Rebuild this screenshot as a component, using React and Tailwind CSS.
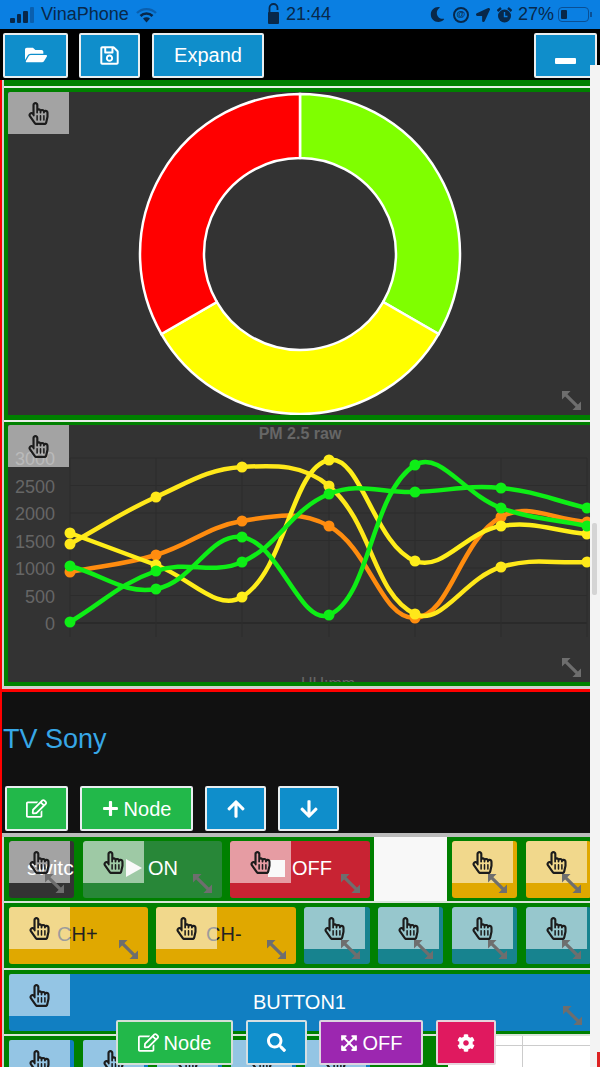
import { FaRegHandPointer, FaFolderOpen, FaRegSave, FaRegEdit, FaPlus, FaArrowUp, FaArrowDown, FaSearch, FaExpandArrowsAlt, FaCog, FaMoon, FaLocationArrow } from 'react-icons/fa'

const XS = [70, 156, 242, 329, 415, 501, 587]
const SERIES = [
  { color: '#ff8c0f', ys: [572, 555, 521, 526, 618, 517, 522] },
  { color: '#ffe81a', ys: [544, 497, 467, 486, 614, 567, 562] },
  { color: '#ffee1a', ys: [533, 565, 597, 460, 561, 526, 534] },
  { color: '#0eee16', ys: [622, 571, 562, 494, 492, 488, 508] },
  { color: '#0eee16', ys: [566, 589, 537, 615, 465, 508, 526] },
]
const LABELS = ['3000', '2500', '2000', '1500', '1000', '500', '0']

// same spline as chart.js, tension 0.4
function splinePath(ys) {
  const pts = ys.map((y, i) => ({ x: XS[i], y }))
  const t = 0.4
  let d = `M${pts[0].x} ${pts[0].y}`
  const ctrl = pts.map((p, i) => {
    const a = pts[i - 1] || p
    const b = pts[i + 1] || p
    const d01 = Math.hypot(p.x - a.x, p.y - a.y)
    const d12 = Math.hypot(b.x - p.x, b.y - p.y)
    const s = d01 + d12 || 1
    const fa = (t * d01) / s
    const fb = (t * d12) / s
    return {
      px: p.x - fa * (b.x - a.x),
      py: p.y - fa * (b.y - a.y),
      nx: p.x + fb * (b.x - a.x),
      ny: p.y + fb * (b.y - a.y),
    }
  })
  for (let i = 1; i < pts.length; i++) {
    d += `C${ctrl[i - 1].nx} ${ctrl[i - 1].ny} ${ctrl[i].px} ${ctrl[i].py} ${pts[i].x} ${pts[i].y}`
  }
  return d
}

function arc(cx, cy, r0, r1, a0, a1) {
  const p = (r, a) => `${cx + r * Math.sin(a)} ${cy - r * Math.cos(a)}`
  return `M${p(r1, a0)}A${r1} ${r1} 0 0 1 ${p(r1, a1)}L${p(r0, a1)}A${r0} ${r0} 0 0 0 ${p(r0, a0)}Z`
}

function ResizeIcon({ className }) {
  return (
    <svg viewBox="0 0 20 20" className={'absolute w-[19px] h-[19px] ' + className}>
      <path d="M4 4L16 16" stroke="#6e6e6e" strokeWidth="3.4" />
      <path d="M0 0H9L0 9Z M20 20H11L20 11Z" fill="#6e6e6e" />
    </svg>
  )
}

// translucent drag handle in the tile's corner
function Handle() {
  return (
    <div className="absolute left-0 top-0 w-[61px] h-[42px] bg-white/55 flex items-center justify-center rounded-tl-[2px] z-[1]">
      <FaRegHandPointer size={23} className="text-[#1c1c1c]" />
    </div>
  )
}

function Tile({ bg, w, children }) {
  return (
    <div className={'relative shrink-0 h-[57px] rounded-[3px] overflow-hidden flex items-center ' + bg + ' ' + w}>
      {children}
      <Handle />
      <ResizeIcon className="right-[10px] bottom-[5px] z-[2]" />
    </div>
  )
}

function ToolBtn({ w, bg = 'bg-[#0f8ecb]', border = 'border-[#e8eef0]', children }) {
  return (
    <button className={'h-[45px] border-2 rounded-[2px] text-white text-[20px] flex items-center justify-center gap-[5px] shrink-0 ' + border + ' ' + bg + ' ' + w}>
      {children}
    </button>
  )
}

function StatusBar() {
  return (
    <div className="h-[29px] bg-[#0a7fe2] flex items-center text-[#08284a] text-[18px]">
      <div className="w-[267px] pl-[10px] flex items-center">
        <div className="flex items-end gap-[2px] h-[16px] mt-[1px]">
          <span className="w-[4.5px] h-[5px] bg-[#08284a] rounded-[1px]" />
          <span className="w-[4.5px] h-[9px] bg-[#08284a] rounded-[1px]" />
          <span className="w-[4.5px] h-[12px] bg-[#08284a] rounded-[1px]" />
          <span className="w-[4.5px] h-[16px] bg-[#0a5fae] rounded-[1px]" />
        </div>
        <span className="ml-[7px]">VinaPhone</span>
        <svg width="21" height="16" viewBox="0 0 21 16" className="ml-[7px]">
          <path d="M1 6A13.5 13.5 0 0 1 20 6" fill="none" stroke="#0a5fae" strokeWidth="2.4" />
          <path d="M4.5 9A8.5 8.5 0 0 1 16.5 9" fill="none" stroke="#08284a" strokeWidth="2.6" />
          <path d="M10.5 15.5L7 11.6A5 5 0 0 1 14 11.6Z" fill="#08284a" />
        </svg>
      </div>
      <svg width="13" height="21" viewBox="0 0 13 21" className="-mt-[3px]">
        <path d="M2.5 10V5A4 4 0 0 1 10.5 5V7" fill="none" stroke="#08284a" strokeWidth="1.8" />
        <rect x="1" y="9" width="11" height="12" rx="1" fill="#08284a" />
      </svg>
      <span className="ml-[6px] font-medium">21:44</span>
      <div className="ml-auto flex items-center pr-[8px]">
        <FaMoon size={15} />
        <span className="ml-[8px] w-[16px] h-[16px] rounded-full border-2 border-[#08284a] text-[9px] font-bold flex items-center justify-center">@</span>
        <FaLocationArrow size={14} className="ml-[7px]" />
        <svg width="15" height="16" viewBox="0 0 15 16" className="ml-[7px]">
          <circle cx="7.5" cy="9" r="6.5" fill="#08284a" />
          <path d="M7.5 5V9.5H10.5" fill="none" stroke="#0a7fe2" strokeWidth="1.4" />
          <path d="M0.5 4L4 1M14.5 4L11 1" stroke="#08284a" strokeWidth="2.4" />
        </svg>
        <span className="ml-[6px]">27%</span>
        <div className="ml-[4px] w-[31px] h-[15px] border border-[#0a4f94] rounded-[4px] p-[2px]">
          <div className="w-[6px] h-full bg-[#08284a] rounded-[1px]" />
        </div>
        <span className="w-[2px] h-[5px] bg-[#0a4f94] ml-[1px]" />
      </div>
    </div>
  )
}

function Toolbar() {
  return (
    <div className="h-[51px] bg-black flex items-center pl-[3px] pr-[3px] pt-[1px]">
      <ToolBtn w="w-[65px]"><FaFolderOpen size={22} /></ToolBtn>
      <ToolBtn w="w-[61px] ml-[11px]"><FaRegSave size={21} /></ToolBtn>
      <ToolBtn w="w-[112px] ml-[12px]">Expand</ToolBtn>
      <ToolBtn w="w-[63px] ml-auto"><span className="w-[21px] h-[6px] bg-white rounded-[1px] mt-[11px]" /></ToolBtn>
    </div>
  )
}

function DonutPanel() {
  return (
    <div className="relative h-[323px] bg-[#333333]">
      <svg viewBox="8 92 582 323" className="w-[582px] h-[323px] block">
        <g stroke="#ffffff" strokeWidth="2.5">
          <path d={arc(300, 254, 96, 160, 0, (2 * Math.PI) / 3)} fill="#7fff00" />
          <path d={arc(300, 254, 96, 160, (2 * Math.PI) / 3, (4 * Math.PI) / 3)} fill="#ffff00" />
          <path d={arc(300, 254, 96, 160, (4 * Math.PI) / 3, 2 * Math.PI)} fill="#ff0000" />
        </g>
      </svg>
      <Handle />
      <ResizeIcon className="right-[9px] bottom-[5px]" />
    </div>
  )
}

function ChartPanel() {
  return (
    <div className="relative h-[257px] bg-[#333333] overflow-hidden">
      <svg viewBox="8 425 582 257" className="w-[582px] h-[257px] block" fontFamily="Liberation Sans, sans-serif">
        {LABELS.map((l, i) => (
          <g key={l}>
            <line x1="70" x2="587" y1={458 + i * 27.5} y2={458 + i * 27.5} stroke={i === 6 ? '#222222' : '#2c2c2c'} />
            <text x="55" y={465 + i * 27.5} textAnchor="end" fontSize="18" fill="#666666">{l}</text>
          </g>
        ))}
        {XS.map(x => <line key={x} x1={x} x2={x} y1="458" y2="637" stroke="#2c2c2c" />)}
        <text x="300" y="439" textAnchor="middle" fontSize="16" fontWeight="700" fill="#666666">PM 2.5 raw</text>
        <text x="328" y="689" textAnchor="middle" fontSize="16" fill="#666666">HH:mm</text>
        {SERIES.map((s, i) => (
          <g key={i}>
            <path d={splinePath(s.ys)} fill="none" stroke={s.color} strokeWidth="4.5" />
            {s.ys.map((y, j) => <circle key={j} cx={XS[j]} cy={y} r="5.5" fill={s.color} />)}
          </g>
        ))}
      </svg>
      <Handle />
      <ResizeIcon className="right-[9px] bottom-[5px]" />
    </div>
  )
}

function Rows() {
  const teal = 'bg-[#17838f]'
  const amber = 'bg-[#e0a800]'
  return (
    <div className="bg-[#d9e4d9]">
      {/* row 1 */}
      <div className="h-[64px] flex">
        <div className="w-[370px] bg-[#008000] pl-[5px] pt-[4px] flex">
          <Tile bg="bg-[#333333]" w="w-[65px]">
            <span className="text-white text-[21px] pl-[18px] -mt-[3px] whitespace-nowrap">switch</span>
          </Tile>
          <Tile bg="bg-[#288738]" w="w-[139px] ml-[9px]">
            <span className="text-white text-[20px] pl-[43px] -mt-[3px] flex items-center gap-[6px] whitespace-nowrap">
              <svg width="16" height="18" viewBox="0 0 16 18"><path d="M0 0L16 9L0 18Z" fill="#f2f2f2" /></svg>ON
            </span>
          </Tile>
          <Tile bg="bg-[#c82333]" w="w-[140px] ml-[8px]">
            <span className="text-white text-[20px] pl-[38px] -mt-[3px] flex items-center gap-[7px] whitespace-nowrap">
              <span className="w-[17px] h-[17px] bg-[#f2f2f2]" />OFF
            </span>
          </Tile>
        </div>
        <div className="w-[73px] bg-[#f8f8f8]" />
        <div className="flex-1 bg-[#008000] pl-[5px] pt-[4px] flex gap-[9px] overflow-hidden">
          <Tile bg={amber} w="w-[65px]" />
          <Tile bg={amber} w="w-[65px]" />
        </div>
      </div>
      {/* row 2 */}
      <div className="h-[65px] mt-[2px] bg-[#008000] pl-[5px] pt-[4px] flex overflow-hidden">
        <Tile bg={amber} w="w-[139px]">
          <span className="text-[#222222] text-[20px] pl-[48px] -mt-[3px]">CH+</span>
        </Tile>
        <Tile bg={amber} w="w-[140px] ml-[8px]">
          <span className="text-[#222222] text-[20px] pl-[50px] -mt-[3px]">CH-</span>
        </Tile>
        <Tile bg={teal} w="w-[66px] ml-[8px]" />
        <Tile bg={teal} w="w-[65px] ml-[8px]" />
        <Tile bg={teal} w="w-[65px] ml-[9px]" />
        <Tile bg={teal} w="w-[65px] ml-[9px]" />
      </div>
      {/* row 3 */}
      <div className="h-[64px] mt-[2px] bg-[#008000] pl-[5px] pt-[4px]">
        <div className="relative h-[57px] bg-[#117fc2] rounded-l-[3px] flex items-center justify-center">
          <span className="text-white text-[20px] -mt-[1px]">BUTTON1</span>
          <Handle />
          <ResizeIcon className="right-[8px] bottom-[6px]" />
        </div>
      </div>
      {/* row 4, runs off the page */}
      <div className="h-[40px] mt-[2px] flex bg-white">
        <div className="w-[444px] bg-[#008000] pl-[5px] pt-[4px] flex gap-[9px] overflow-hidden">
          {[0, 1, 2, 3, 4].map(i => (
            <div key={i} className="relative w-[65px] h-[57px] shrink-0 bg-[#117fc2] rounded-[3px]"><Handle /></div>
          ))}
        </div>
        <div className="flex-1 relative">
          <div className="absolute left-0 right-0 top-[9px] h-px bg-[#cccccc]" />
          <div className="absolute left-[74px] top-0 bottom-0 w-px bg-[#cccccc]" />
        </div>
      </div>
    </div>
  )
}

function TvHeader() {
  return (
    <div className="h-[141px] bg-[#111111] flex flex-col">
      <div className="text-[#37a7e6] text-[27px] leading-[32px] pl-[1px] mt-[31px]">TV Sony</div>
      <div className="mt-auto mb-[2px] flex pl-[3px]">
        <ToolBtn w="w-[63px]" bg="bg-[#22b84a]"><FaRegEdit size={21} /></ToolBtn>
        <ToolBtn w="w-[113px] ml-[12px]" bg="bg-[#22b84a]"><FaPlus size={17} />Node</ToolBtn>
        <ToolBtn w="w-[61px] ml-[12px]"><FaArrowUp size={20} /></ToolBtn>
        <ToolBtn w="w-[61px] ml-[12px]"><FaArrowDown size={20} /></ToolBtn>
      </div>
    </div>
  )
}

export default function App() {
  return (
    <div className="relative w-[600px] h-[1067px] overflow-hidden bg-[#f3f3f3] font-['Liberation_Sans',sans-serif]">
      <StatusBar />
      <Toolbar />

      <div className="w-[590px] border-l-2 border-[#ff0000]">
        <div className="bg-[#d0d0d0] pl-[2px]">
          <div className="bg-[#008000] h-[12px] flex flex-col pt-[6px]"><div className="h-[2px] bg-[#e6efe6]" /></div>
          <div className="bg-[#008000] pl-[4px]"><DonutPanel /></div>
          <div className="bg-[#008000] h-[10px] pt-[5px]"><div className="h-[2px] bg-[#e6efe6]" /></div>
          <div className="bg-[#008000] pl-[4px]"><ChartPanel /></div>
          <div className="bg-[#008000] h-[4px]" />
          <div className="h-[3px]" />
        </div>
      </div>
      <div className="w-[590px] h-[3px] bg-[#ff0000]" />

      <div className="w-[590px] border-l-2 border-[#ff0000]">
        <TvHeader />
        <div className="h-[4px] bg-[#bbbbbb]" />
        <div className="pl-[2px] bg-[#d0d0d0]"><Rows /></div>
      </div>

      {/* right rail with scrollbar */}
      <div className="absolute right-0 top-[65px] bottom-0 w-[10px] bg-[#f3f3f3] z-10">
        <div className="absolute left-[2px] top-[458px] w-[5px] h-[72px] bg-[#d4d4d4] rounded-[2px]" />
        <div className="absolute left-[7px] top-[987px] bottom-0 w-[3px] bg-[#dd2222]" />
      </div>

      {/* floating bottom bar */}
      <div className="absolute left-[116px] top-[1020px] flex z-20">
        <ToolBtn w="w-[117px]" bg="bg-[#22b84a]" border="border-[#d5dfd8]"><FaRegEdit size={21} />Node</ToolBtn>
        <ToolBtn w="w-[61px] ml-[13px]" border="border-[#d5dfe3]"><FaSearch size={19} /></ToolBtn>
        <ToolBtn w="w-[104px] ml-[12px]" bg="bg-[#9c27b0]" border="border-[#dcd5e0]"><FaExpandArrowsAlt size={18} />OFF</ToolBtn>
        <ToolBtn w="w-[60px] ml-[13px]" bg="bg-[#e0195f]" border="border-[#e6d5dc]"><FaCog size={18} /></ToolBtn>
      </div>
    </div>
  )
}
